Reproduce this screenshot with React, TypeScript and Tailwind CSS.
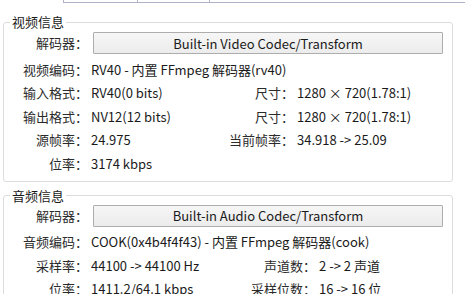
import type { ReactNode } from 'react'

interface RowProps {
  label: string
  value: ReactNode
  rightLabel?: string
  rightValue?: ReactNode
  wide?: boolean
}

// 左右两列的信息行
function InfoRow({ label, value, rightLabel, rightValue, wide }: RowProps) {
  return (
    <div className="flex h-[23.5px] items-center whitespace-nowrap">
      <div className="w-[84px] text-right text-[#2b2b2b]">{label}</div>
      <div className={`ml-[3px] ${rightLabel ? (wide ? 'w-[159px]' : 'w-[137px]') : ''}`}>{value}</div>
      {rightLabel && (
        <>
          <div className="w-[66px] text-right text-[#2b2b2b]">{rightLabel}</div>
          <div className="ml-[3px]">{rightValue}</div>
        </>
      )}
    </div>
  )
}

function DecoderButton({ text }: { text: string }) {
  return (
    <div className="flex h-[22px] items-center">
      <div className="w-[84px] text-right text-[#2b2b2b]">解码器：</div>
      <button className="ml-[5px] h-[22px] w-[350px] rounded-[1px] border border-[#adadad] bg-gradient-to-b from-[#f6f6f6] to-[#ececec] text-[#1a1a1a] leading-none">
        {text}
      </button>
    </div>
  )
}

export default function App() {
  return (
    <div className="h-[294px] w-[472px] overflow-hidden bg-white text-[13px] leading-[16px] text-[#1a1a1a] [font-variant-ligatures:none] font-['Noto_Sans_CJK_SC',sans-serif]">
      {/* 顶部标签栏底边 */}
      <div className="ml-[63px] mr-[7px] flex h-[3px] border-b border-[#aeb2c8]">
        <div className="w-[74px] border-l border-[#aeb2c8]" />
        <div className="w-[72px] border-l border-[#aeb2c8]" />
        <div className="flex-1 border-l border-[#aeb2c8]" />
      </div>

      {/* 视频信息 */}
      <fieldset className="ml-[3px] mt-[11px] w-[450px] rounded-[3px] border border-[#dcdcdc] pb-[5px]">
        <legend className="ml-[6px] px-[2px] text-[#1a1a1a]">视频信息</legend>
        <div className="mt-[2px]">
          <DecoderButton text="Built-in Video Codec/Transform" />
        </div>
        <div className="mt-[4px]">
          <InfoRow label="视频编码：" value="RV40 - 内置 FFmpeg 解码器(rv40)" />
          <InfoRow label="输入格式：" value="RV40(0 bits)" rightLabel="尺寸：" rightValue="1280 × 720(1.78:1)" />
          <InfoRow label="输出格式：" value="NV12(12 bits)" rightLabel="尺寸：" rightValue="1280 × 720(1.78:1)" />
          <InfoRow label="源帧率：" value="24.975" rightLabel="当前帧率：" rightValue="34.918 -> 25.09" />
          <InfoRow label="位率：" value="3174 kbps" />
        </div>
      </fieldset>

      {/* 音频信息 */}
      <fieldset className="ml-[3px] mt-[6px] w-[450px] rounded-[3px] border border-[#dcdcdc] pb-[5px]">
        <legend className="ml-[6px] px-[2px] text-[#1a1a1a]">音频信息</legend>
        <div className="mt-[1px]">
          <DecoderButton text="Built-in Audio Codec/Transform" />
        </div>
        <div className="mt-[4px]">
          <InfoRow label="音频编码：" value="COOK(0x4b4f4f43) - 内置 FFmpeg 解码器(cook)" />
          <InfoRow label="采样率：" value="44100 -> 44100 Hz" rightLabel="声道数：" rightValue="2 -> 2 声道" wide />
          <InfoRow label="位率：" value="1411.2/64.1 kbps" rightLabel="采样位数：" rightValue="16 -> 16 位" wide />
        </div>
      </fieldset>
    </div>
  )
}
